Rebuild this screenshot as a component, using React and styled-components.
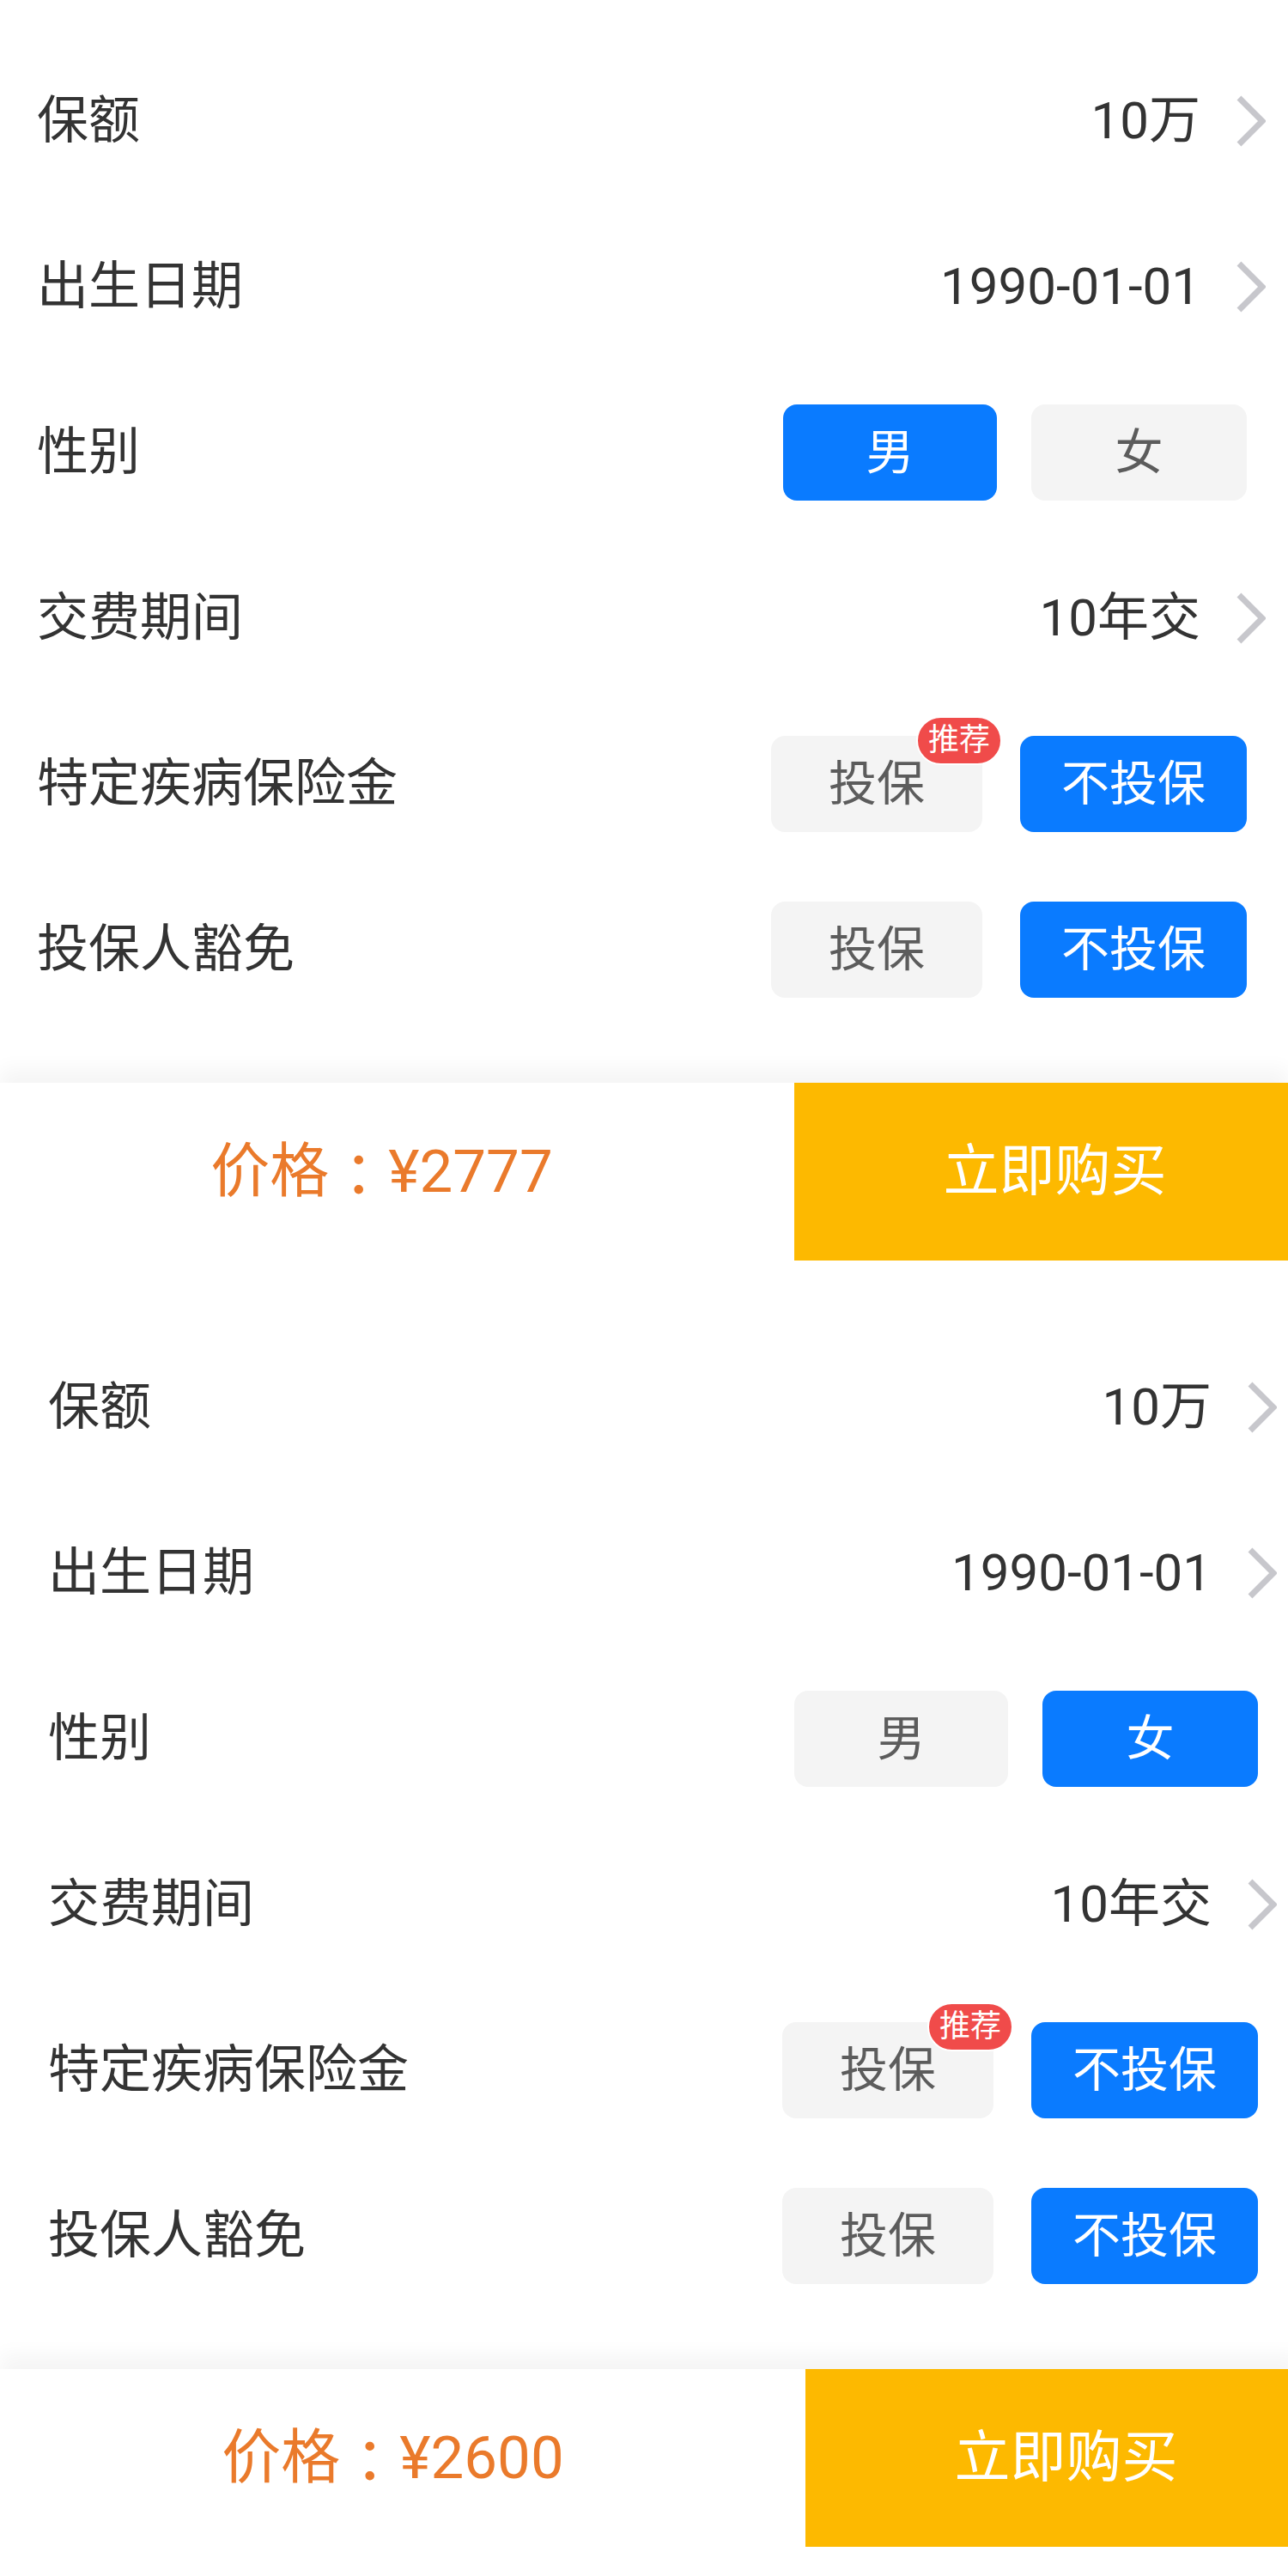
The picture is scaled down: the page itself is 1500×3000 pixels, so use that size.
import React from "react";
import styled, { createGlobalStyle } from "styled-components";

const Global = createGlobalStyle`
  html, body { margin: 0; padding: 0; background: #ffffff; }
  body { font-family: Roboto, "Noto Sans CJK SC", "Noto Sans", sans-serif; }
  * { box-sizing: border-box; }
`;

const Page = styled.div`
  width: 1500px;
  overflow: hidden;
  display: flex;
  flex-direction: column;
  gap: 30px;
  padding-bottom: 40px;
`;

const Block = styled.section`
  width: ${(p) => 1500 + (p.$shift || 0)}px;
  flex: none;
  display: flex;
  flex-direction: column;
`;

const Form = styled.div`
  padding-top: 44px;
  padding-left: ${(p) => p.$shift || 0}px;
  display: flex;
  flex-direction: column;
`;

const Row = styled.div`
  height: 193px;
  display: flex;
  align-items: center;
  justify-content: space-between;
  padding: 0 26px 0 43px;
`;

const Label = styled.div`
  font-size: 60px;
  line-height: 1;
  color: #333333;
`;

const Picker = styled.div`
  display: flex;
  align-items: center;
  gap: 42px;
`;

const Value = styled.span`
  font-size: 60px;
  line-height: 1;
  color: #333333;
`;

const Options = styled.div`
  display: flex;
  align-items: center;
  gap: ${(p) => p.$gap}px;
  margin-right: 22px;
`;

const Option = styled.div`
  position: relative;
  width: ${(p) => p.$w}px;
  height: 112px;
  border-radius: 16px;
  display: flex;
  align-items: center;
  justify-content: center;
  font-size: 56px;
  line-height: 1;
  background: ${(p) => (p.$active ? "#0a7bff" : "#f4f4f4")};
  color: ${(p) => (p.$active ? "#ffffff" : "#5c5c5c")};
`;

const Badge = styled.span`
  position: absolute;
  top: -23px;
  right: -23px;
  height: 57px;
  padding: 0 12px;
  border-radius: 29px;
  border: 2px solid #ffffff;
  background: #f04b4a;
  color: #ffffff;
  font-size: 36px;
  line-height: 1;
  display: flex;
  align-items: center;
`;

const Bar = styled.div`
  margin-top: 59px;
  height: 207px;
  display: flex;
  background: #ffffff;
  box-shadow: 0 -16px 22px rgba(0, 0, 0, 0.045);
`;

const PriceArea = styled.div`
  flex: 1;
  display: flex;
  align-items: center;
  justify-content: center;
  padding-left: ${(p) => p.$shift || 0}px;
  padding-right: 36px;
  font-size: 69px;
  line-height: 1;
  color: #ea7a2b;
`;

const Colon = styled.span`
  font-family: "Noto Sans CJK TC", "Noto Sans CJK SC", sans-serif;
`;

const BuyButton = styled.div`
  width: 575px;
  display: flex;
  align-items: center;
  justify-content: center;
  padding-left: 32px;
  background: #fdb900;
  color: #ffffff;
  font-size: 65px;
  line-height: 1;
`;

const Chevron = () => (
  <svg width="34" height="60" viewBox="0 0 34 60" fill="none">
    <polyline
      points="3,3 30,30 3,57"
      stroke="#c7c7cc"
      strokeWidth="7"
      strokeLinejoin="miter"
      strokeLinecap="butt"
    />
  </svg>
);

const PickRow = ({ label, value }) => (
  <Row>
    <Label>{label}</Label>
    <Picker>
      <Value>{value}</Value>
      <Chevron />
    </Picker>
  </Row>
);

const ChoiceRow = ({ label, options, gap }) => (
  <Row>
    <Label>{label}</Label>
    <Options $gap={gap}>
      {options.map((o) => (
        <Option key={o.text} $w={o.w} $active={o.active}>
          {o.text}
          {o.badge && <Badge>{o.badge}</Badge>}
        </Option>
      ))}
    </Options>
  </Row>
);

const Quote = ({ gender, price, shift }) => (
  <Block $shift={shift}>
    <Form $shift={shift}>
      <PickRow label="保额" value="10万" />
      <PickRow label="出生日期" value="1990-01-01" />
      <ChoiceRow
        label="性别"
        gap={40}
        options={[
          { text: "男", w: 249, active: gender === "m" },
          { text: "女", w: 251, active: gender === "f" },
        ]}
      />
      <PickRow label="交费期间" value="10年交" />
      <ChoiceRow
        label="特定疾病保险金"
        gap={44}
        options={[
          { text: "投保", w: 246, badge: "推荐" },
          { text: "不投保", w: 264, active: true },
        ]}
      />
      <ChoiceRow
        label="投保人豁免"
        gap={44}
        options={[
          { text: "投保", w: 246 },
          { text: "不投保", w: 264, active: true },
        ]}
      />
    </Form>
    <Bar>
      <PriceArea $shift={shift}>
        价格<Colon>：</Colon>¥{price}
      </PriceArea>
      <BuyButton>立即购买</BuyButton>
    </Bar>
  </Block>
);

export default function App() {
  return (
    <>
      <Global />
      <Page>
        <Quote gender="m" price="2777" shift={0} />
        <Quote gender="f" price="2600" shift={13} />
      </Page>
    </>
  );
}
